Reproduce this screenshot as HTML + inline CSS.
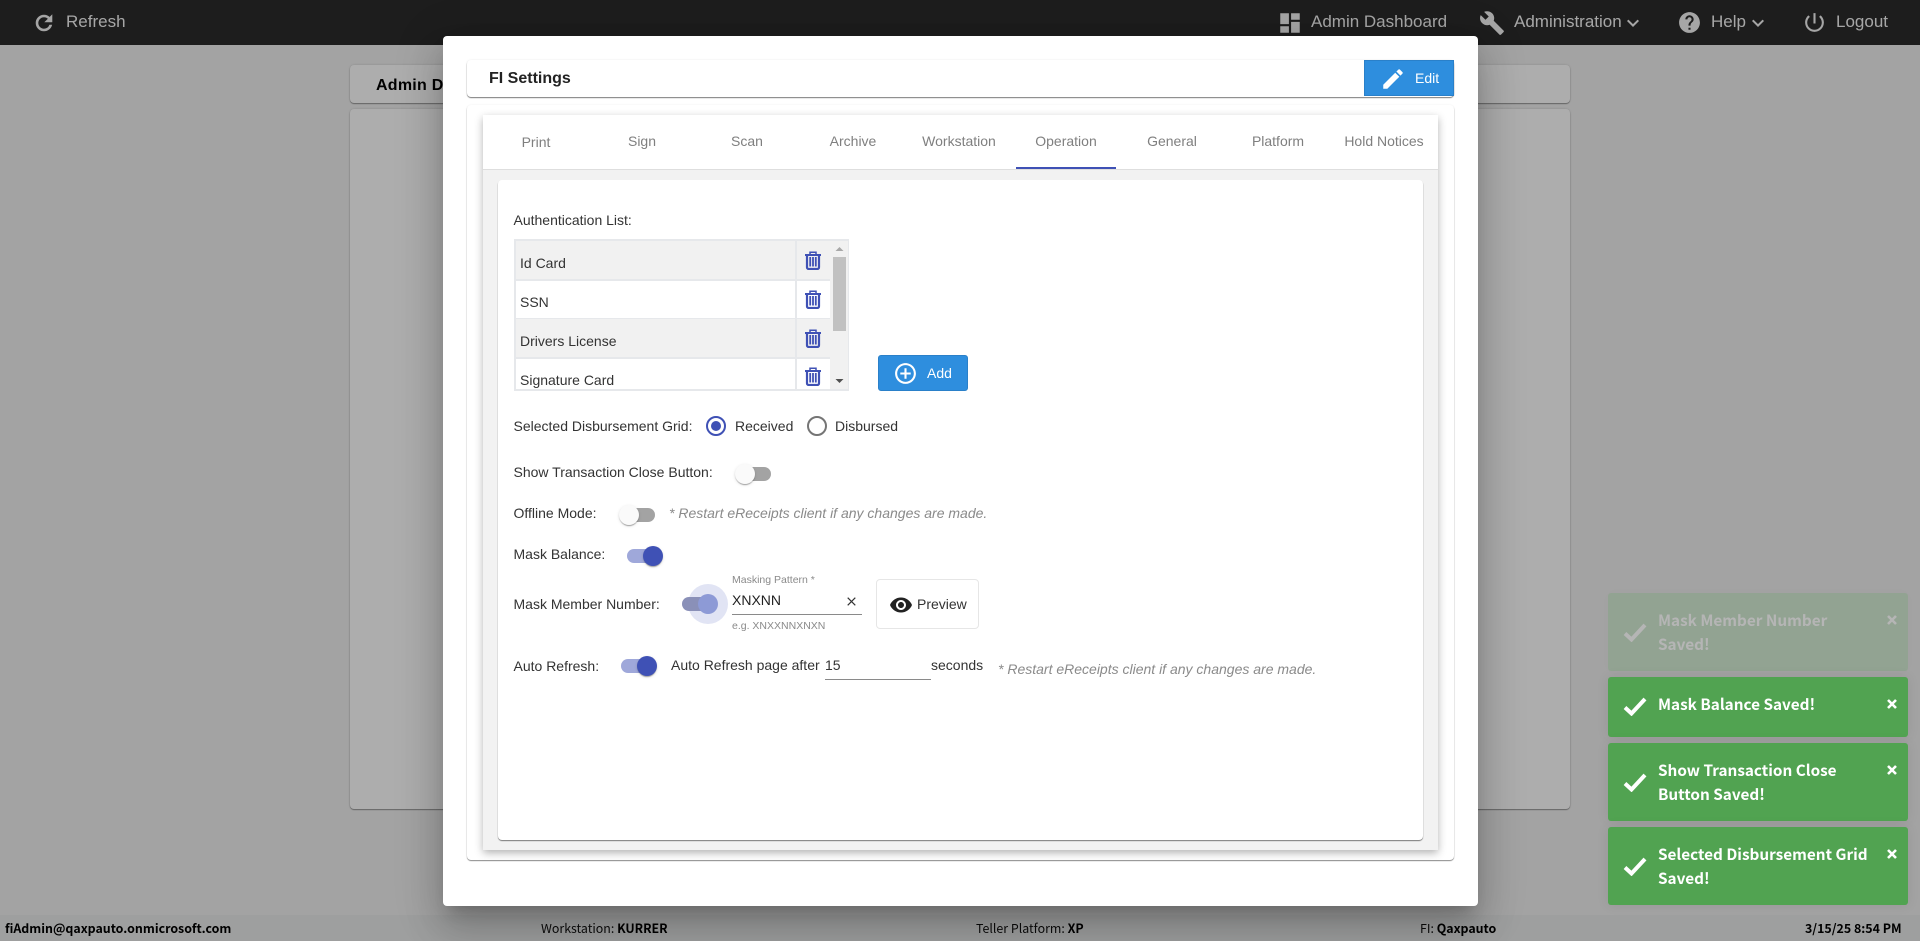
<!DOCTYPE html>
<html lang="en">
<head>
<meta charset="utf-8">
<title>FI Settings</title>
<style>
html,body{margin:0;padding:0;width:1920px;height:941px;overflow:hidden;background:#f0f0f0;font-family:"Liberation Sans",Arial,sans-serif;color:#333;font-size:14px}
.a{position:absolute}
.t{position:absolute;white-space:nowrap;line-height:20px}
svg{position:absolute;display:block}
.hd{position:absolute;left:0;top:0;width:1920px;height:45px;background:#2b2b2b}
.hd .t{color:#f5f5f5;font-size:17px;top:12px}
.hd svg{fill:#f5f5f5}
.bgc{position:absolute;background:#fff;border-radius:4px;box-shadow:0 1px 1px rgba(0,0,0,.35),0 0 2px rgba(0,0,0,.15)}
.ft{position:absolute;left:0;top:915px;width:1920px;height:26px;background:#e9eaea}
.ft .t{font-family:"Noto Sans CJK SC","Liberation Sans",sans-serif;font-size:12.4px;color:#111;top:3px}
.ft b{font-weight:700;color:#000}
.bd{position:absolute;left:0;top:0;width:1920px;height:941px;background:rgba(0,0,0,.32)}
.modal{position:absolute;left:443px;top:36px;width:1035px;height:870px;background:#fff;border-radius:4px;box-shadow:0 11px 15px -7px rgba(0,0,0,.2),0 24px 38px 3px rgba(0,0,0,.14),0 9px 46px 8px rgba(0,0,0,.12)}
.tab{position:absolute;top:131px;width:106px;text-align:center;color:#7f7f7f;line-height:20px;font-size:14px;white-space:nowrap}
.row{position:absolute;left:516px;width:314px;height:38px;border-bottom:2px solid #e6e8eb}
.row .c{position:absolute;left:279px;top:0;width:2px;height:100%;background:#e6e8eb}
.track{position:absolute;width:34px;height:14px;border-radius:7px}
.thumb{position:absolute;width:20px;height:20px;border-radius:50%;box-shadow:0 2px 1px -1px rgba(0,0,0,.2),0 1px 1px rgba(0,0,0,.14),0 1px 3px rgba(0,0,0,.12)}
.toast{position:absolute;left:1608px;width:300px;background:#51a351;border-radius:3px;box-shadow:0 0 12px rgba(0,0,0,.08);color:#fff}
.toast .m{position:absolute;left:50px;font-family:"Noto Sans CJK SC","Liberation Sans",sans-serif;font-weight:700;font-size:15.3px;line-height:24px;white-space:nowrap}
.toast svg{fill:none;stroke:#fff}
.tr{fill:none;stroke:#3f51b5}
</style>
</head>
<body>
<div class="hd">
  <svg style="left:32px;top:11px" width="24" height="24" viewBox="0 0 24 24"><path stroke="#f5f5f5" stroke-width=".6" d="M17.65 6.35C16.2 4.9 14.21 4 12 4c-4.42 0-7.99 3.58-7.99 8s3.57 8 7.99 8c3.73 0 6.84-2.55 7.73-6h-2.08c-.82 2.33-3.04 4-5.65 4-3.31 0-6-2.69-6-6s2.69-6 6-6c1.66 0 3.14.69 4.22 1.78L13 11h7V4l-2.35 2.35z"/></svg>
  <div class="t" style="left:66px">Refresh</div>
  <svg style="left:1277px;top:10px" width="26" height="26" viewBox="0 0 24 24"><path d="M3 13h8V3H3v10zm0 8h8v-6H3v6zm10 0h8V11h-8v10zm0-18v6h8V3h-8z"/></svg>
  <div class="t" style="left:1311px">Admin Dashboard</div>
  <svg style="left:1479px;top:10px" width="26" height="26" viewBox="0 0 24 24"><path d="M22.7 19l-9.1-9.1c.9-2.3.4-5-1.5-6.9-2-2-5-2.4-7.4-1.3L9 6 6 9 1.6 4.7C.4 7.1.9 10.1 2.9 12.1c1.9 1.9 4.6 2.4 6.9 1.5l9.1 9.1c.4.4 1 .4 1.4 0l2.3-2.3c.5-.4.5-1.1.1-1.4z"/></svg>
  <div class="t" style="left:1514px">Administration</div>
  <svg style="left:1621px;top:11px" width="24" height="24" viewBox="0 0 24 24"><path d="M16.59 8.59L12 13.17 7.41 8.59 6 10l6 6 6-6z"/></svg>
  <svg style="left:1677px;top:10px" width="25" height="25" viewBox="0 0 24 24"><path d="M12 2C6.48 2 2 6.48 2 12s4.48 10 10 10 10-4.48 10-10S17.52 2 12 2zm1 17h-2v-2h2v2zm2.07-7.75l-.9.92C13.45 12.9 13 13.5 13 15h-2v-.5c0-1.1.45-2.1 1.17-2.83l1.24-1.26c.37-.36.59-.86.59-1.41 0-1.1-.9-2-2-2s-2 .9-2 2H8c0-2.21 1.79-4 4-4s4 1.79 4 4c0 .88-.36 1.68-.93 2.25z"/></svg>
  <div class="t" style="left:1711px">Help</div>
  <svg style="left:1746px;top:11px" width="24" height="24" viewBox="0 0 24 24"><path d="M16.59 8.59L12 13.17 7.41 8.59 6 10l6 6 6-6z"/></svg>
  <svg style="left:1802px;top:10px" width="25" height="25" viewBox="0 0 24 24"><path d="M13 3h-2v10h2V3zm4.83 2.17l-1.42 1.42C17.99 7.86 19 9.81 19 12c0 3.87-3.13 7-7 7s-7-3.13-7-7c0-2.19 1.01-4.14 2.58-5.42L6.17 5.17C4.23 6.82 3 9.26 3 12c0 4.97 4.03 9 9 9s9-4.03 9-9c0-2.74-1.23-5.18-3.17-6.83z"/></svg>
  <div class="t" style="left:1836px">Logout</div>
</div>

<div class="bgc" style="left:350px;top:65px;width:1220px;height:38px"></div>
<div class="t" style="left:376px;top:76px;font-weight:700;font-size:16px;letter-spacing:.25px;color:#000">Admin Dashboard</div>
<div class="bgc" style="left:350px;top:109px;width:1220px;height:700px"></div>

<div class="ft">
  <div class="t" style="left:5px;font-weight:700;color:#000">fiAdmin@qaxpauto.onmicrosoft.com</div>
  <div class="t" style="left:541px">Workstation: <b>KURRER</b></div>
  <div class="t" style="left:976px">Teller Platform: <b>XP</b></div>
  <div class="t" style="left:1420px">FI: <b>Qaxpauto</b></div>
  <div class="t" style="left:1805px;font-weight:700;color:#000">3/15/25 8:54 PM</div>
</div>

<div class="bd"></div>

<div class="modal"></div>

<div class="a" style="left:467px;top:60px;width:987px;height:37px;background:#fff;border-radius:4px;box-shadow:0 1px 1px rgba(0,0,0,.5),0 0 2px rgba(0,0,0,.08)"></div>
<div class="t" style="left:489px;top:67px;font-weight:700;font-size:16px;color:#222;line-height:24px">FI Settings</div>
<div class="a" style="left:1364px;top:60px;width:90px;height:36px;box-sizing:border-box;background:#2e8ede;border:1px solid #2a80c9"></div>
<svg style="left:1380px;top:66px;fill:#fff" width="26" height="26" viewBox="0 0 24 24"><path d="M3 17.25V21h3.75L17.81 9.94l-3.75-3.75L3 17.25zM20.71 7.04c.39-.39.39-1.02 0-1.41l-2.34-2.34c-.39-.39-1.02-.39-1.41 0l-1.83 1.83 3.75 3.75 1.83-1.83z"/></svg>
<div class="t" style="left:1415px;top:68px;color:#fff">Edit</div>

<div class="a" style="left:467px;top:105px;width:987px;height:755px;background:#fff;border-radius:4px;box-shadow:0 1px 1px rgba(0,0,0,.45),0 0 2px rgba(0,0,0,.06)"></div>
<div class="a" style="left:483px;top:115px;width:955px;height:735px;background:#f2f2f2;box-shadow:0 3px 8px rgba(0,0,0,.3)"></div>
<div class="a" style="left:483px;top:115px;width:955px;height:55px;box-sizing:border-box;background:#fff;border-bottom:1px solid #dedede"></div>
<div class="tab" style="left:483px;top:132px">Print</div>
<div class="tab" style="left:589px">Sign</div>
<div class="tab" style="left:694px">Scan</div>
<div class="tab" style="left:800px">Archive</div>
<div class="tab" style="left:906px">Workstation</div>
<div class="tab" style="left:1013px">Operation</div>
<div class="tab" style="left:1119px">General</div>
<div class="tab" style="left:1225px">Platform</div>
<div class="tab" style="left:1331px">Hold Notices</div>
<div class="a" style="left:1016px;top:167px;width:100px;height:2px;background:#3f51b5"></div>

<div class="a" style="left:498px;top:180px;width:925px;height:660px;background:#fff;border-radius:4px;box-shadow:0 1px 1px rgba(0,0,0,.5)"></div>

<div class="t" style="left:513.5px;top:210px">Authentication List:</div>

<!-- grid -->
<div class="a" style="left:514px;top:239px;width:335px;height:152px;box-sizing:border-box;border:2px solid #e6e8eb;background:#fff"></div>
<div class="row" style="top:241px;background:#f1f1f1"><div class="c"></div></div>
<div class="row" style="top:280px"><div class="c"></div></div>
<div class="row" style="top:319px;background:#f1f1f1"><div class="c"></div></div>
<div class="row" style="top:358px;height:31px;border-bottom:0"><div class="c"></div></div>
<div class="t" style="left:520px;top:253px">Id Card</div>
<div class="t" style="left:520px;top:292px">SSN</div>
<div class="t" style="left:520px;top:331px">Drivers License</div>
<div class="t" style="left:520px;top:370px;height:19px;overflow:hidden">Signature Card</div>
<div class="a" style="left:830px;top:241px;width:18px;height:148px;background:#f1f1f1"></div>
<div class="a" style="left:833px;top:257px;width:13px;height:74px;background:#c1c1c1"></div>
<svg style="left:834px;top:246px" width="11" height="6" viewBox="0 0 11 6"><path d="M5.5 1L9.5 5H1.5z" fill="#a8a8a8"/></svg>
<svg style="left:834px;top:378px" width="11" height="6" viewBox="0 0 11 6"><path d="M1.5 1H9.5L5.5 5z" fill="#505050"/></svg>

<svg style="left:805px;top:251px" width="16" height="19" viewBox="0 0 16 19"><g class="tr"><path stroke-width="1.5" d="M5 3V1.300h6V3"/><path stroke-width="2" d="M0 4h16"/><path stroke-width="2.200" d="M2 4.500v11.700c0 1 .6 1.800 1.600 1.800h8.800c1 0 1.600-.8 1.600-1.800V4.500"/><path stroke-width="1.800" d="M5.200 6v9.500M8 6v9.500M10.800 6v9.500"/></g></svg>
<svg style="left:805px;top:290px" width="16" height="19" viewBox="0 0 16 19"><g class="tr"><path stroke-width="1.5" d="M5 3V1.300h6V3"/><path stroke-width="2" d="M0 4h16"/><path stroke-width="2.200" d="M2 4.500v11.700c0 1 .6 1.800 1.600 1.800h8.800c1 0 1.600-.8 1.600-1.800V4.500"/><path stroke-width="1.800" d="M5.200 6v9.500M8 6v9.500M10.800 6v9.500"/></g></svg>
<svg style="left:805px;top:329px" width="16" height="19" viewBox="0 0 16 19"><g class="tr"><path stroke-width="1.5" d="M5 3V1.300h6V3"/><path stroke-width="2" d="M0 4h16"/><path stroke-width="2.200" d="M2 4.500v11.700c0 1 .6 1.800 1.600 1.800h8.800c1 0 1.600-.8 1.600-1.800V4.500"/><path stroke-width="1.800" d="M5.200 6v9.500M8 6v9.500M10.800 6v9.500"/></g></svg>
<svg style="left:805px;top:367px" width="16" height="19" viewBox="0 0 16 19"><g class="tr"><path stroke-width="1.5" d="M5 3V1.300h6V3"/><path stroke-width="2" d="M0 4h16"/><path stroke-width="2.200" d="M2 4.500v11.700c0 1 .6 1.800 1.600 1.800h8.800c1 0 1.600-.8 1.600-1.800V4.500"/><path stroke-width="1.800" d="M5.200 6v9.500M8 6v9.500M10.800 6v9.500"/></g></svg>

<div class="a" style="left:878px;top:355px;width:90px;height:36px;box-sizing:border-box;background:#2e8ede;border:1px solid #2a80c9;border-radius:3px"></div>
<svg style="left:893px;top:361px;fill:#fff" width="25" height="25" viewBox="0 0 24 24"><path d="M13 7h-2v4H7v2h4v4h2v-4h4v-2h-4V7zm-1-5C6.48 2 2 6.48 2 12s4.48 10 10 10 10-4.480 10-10S17.520 2 12 2zm0 18c-4.410 0-8-3.590-8-8s3.590-8 8-8 8 3.590 8 8-3.590 8-8 8z"/></svg>
<div class="t" style="left:927px;top:363px;color:#fff">Add</div>

<!-- radios -->
<div class="t" style="left:513.5px;top:416px">Selected Disbursement Grid:</div>
<svg style="left:706px;top:416px" width="20" height="20" viewBox="0 0 20 20"><circle cx="10" cy="10" r="9" fill="none" stroke="#3f51b5" stroke-width="2"/><circle cx="10" cy="10" r="5" fill="#3f51b5"/></svg>
<div class="t" style="left:735px;top:416px">Received</div>
<svg style="left:807px;top:416px" width="20" height="20" viewBox="0 0 20 20"><circle cx="10" cy="10" r="9" fill="none" stroke="#757575" stroke-width="2"/></svg>
<div class="t" style="left:835px;top:416px">Disbursed</div>

<!-- show transaction -->
<div class="t" style="left:513.5px;top:462px">Show Transaction Close Button:</div>
<div class="track" style="left:737px;top:467px;background:#a3a3a3"></div>
<div class="thumb" style="left:735px;top:464px;background:#fafafa"></div>

<!-- offline -->
<div class="t" style="left:513.5px;top:503px">Offline Mode:</div>
<div class="track" style="left:621px;top:508px;background:#a3a3a3"></div>
<div class="thumb" style="left:619px;top:505px;background:#fafafa"></div>
<div class="t" style="left:669px;top:503px;font-style:italic;color:#8a8a8a">* Restart eReceipts client if any changes are made.</div>

<!-- mask balance -->
<div class="t" style="left:513.5px;top:544px">Mask Balance:</div>
<div class="track" style="left:627px;top:549px;background:#9fa8da"></div>
<div class="thumb" style="left:643px;top:546px;background:#3f51b5"></div>

<!-- mask member -->
<div class="t" style="left:513.5px;top:594px">Mask Member Number:</div>
<div class="a" style="left:688px;top:584px;width:40px;height:40px;border-radius:50%;background:#e1e4f4"></div>
<div class="track" style="left:682px;top:597px;background:#8a90b8"></div>
<div class="thumb" style="left:698px;top:594px;background:#8d9ad6;box-shadow:none"></div>
<div class="t" style="left:732px;top:570px;font-size:10.5px;color:#8a8a8a">Masking Pattern *</div>
<div class="t" style="left:732px;top:590px;color:#222">XNXNN</div>
<svg style="left:847px;top:597px" width="9" height="9" viewBox="0 0 9 9"><path d="M.7.7l7.600 7.600M8.300.7L.7 8.300" stroke="#333" stroke-width="1.2" fill="none"/></svg>
<div class="a" style="left:732px;top:614px;width:130px;height:1px;background:#8a8a8a"></div>
<div class="t" style="left:732px;top:616px;font-size:10.5px;color:#8a8a8a">e.g. XNXXNNXNXN</div>
<div class="a" style="left:876px;top:579px;width:103px;height:50px;box-sizing:border-box;background:#fff;border:1px solid #e6e6e6;border-radius:4px"></div>
<svg style="left:889px;top:593px;fill:#222" width="24" height="24" viewBox="0 0 24 24"><path d="M12 4.500C7 4.500 2.730 7.610 1 12c1.730 4.390 6 7.500 11 7.500s9.270-3.110 11-7.500c-1.730-4.390-6-7.500-11-7.500zM12 17c-2.760 0-5-2.240-5-5s2.240-5 5-5 5 2.240 5 5-2.240 5-5 5zm0-8c-1.660 0-3 1.340-3 3s1.340 3 3 3 3-1.340 3-3-1.340-3-3-3z"/></svg>
<div class="t" style="left:917px;top:594px">Preview</div>

<!-- auto refresh -->
<div class="t" style="left:513.5px;top:656px">Auto Refresh:</div>
<div class="track" style="left:621px;top:659px;background:#9fa8da"></div>
<div class="thumb" style="left:637px;top:656px;background:#3f51b5"></div>
<div class="t" style="left:671px;top:655px">Auto Refresh page after</div>
<div class="t" style="left:825px;top:655px">15</div>
<div class="a" style="left:825px;top:679px;width:106px;height:1px;background:#8a8a8a"></div>
<div class="t" style="left:931px;top:655px">seconds</div>
<div class="t" style="left:998px;top:659px;font-style:italic;color:#8a8a8a">* Restart eReceipts client if any changes are made.</div>

<!-- toasts -->
<div class="toast" style="top:593px;height:78px;opacity:.2">
  <svg style="left:15px;top:30px" width="24" height="19" viewBox="0 0 24 19"><path d="M2 10.500l6.500 6L22 2" stroke-width="4"/></svg>
  <div class="m" style="top:15px">Mask Member Number<br>Saved!</div>
  <svg style="left:279px;top:22px" width="10" height="10" viewBox="0 0 10 10"><path d="M1 1l8 8M9 1L1 9" stroke-width="2.600"/></svg>
</div>
<div class="toast" style="top:677px;height:60px">
  <svg style="left:15px;top:20px" width="24" height="19" viewBox="0 0 24 19"><path d="M2 10.500l6.500 6L22 2" stroke-width="4"/></svg>
  <div class="m" style="top:15px">Mask Balance Saved!</div>
  <svg style="left:279px;top:22px" width="10" height="10" viewBox="0 0 10 10"><path d="M1 1l8 8M9 1L1 9" stroke-width="2.600"/></svg>
</div>
<div class="toast" style="top:743px;height:78px">
  <svg style="left:15px;top:30px" width="24" height="19" viewBox="0 0 24 19"><path d="M2 10.500l6.500 6L22 2" stroke-width="4"/></svg>
  <div class="m" style="top:15px">Show Transaction Close<br>Button Saved!</div>
  <svg style="left:279px;top:22px" width="10" height="10" viewBox="0 0 10 10"><path d="M1 1l8 8M9 1L1 9" stroke-width="2.600"/></svg>
</div>
<div class="toast" style="top:827px;height:78px">
  <svg style="left:15px;top:30px" width="24" height="19" viewBox="0 0 24 19"><path d="M2 10.500l6.500 6L22 2" stroke-width="4"/></svg>
  <div class="m" style="top:15px">Selected Disbursement Grid<br>Saved!</div>
  <svg style="left:279px;top:22px" width="10" height="10" viewBox="0 0 10 10"><path d="M1 1l8 8M9 1L1 9" stroke-width="2.600"/></svg>
</div>
</body>
</html>
